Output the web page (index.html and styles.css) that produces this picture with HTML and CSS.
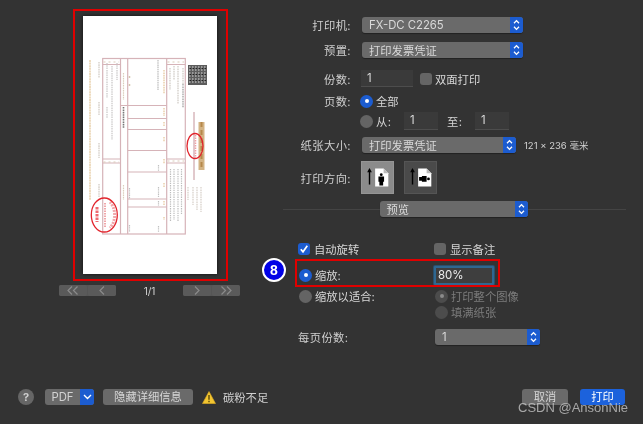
FILE: index.html
```html
<!DOCTYPE html>
<html lang="zh-CN">
<head>
<meta charset="utf-8">
<title>打印</title>
<link rel="stylesheet" href="styles.css">
</head>
<body>
<svg class="defs" width="0" height="0" aria-hidden="true">
  <symbol id="updown" viewBox="0 0 13 16">
    <path d="M4 6.300 6.500 3.600 9 6.300M4 9.700 6.500 12.400 9 9.700" fill="none" stroke="#fff" stroke-width="1.300"/>
  </symbol>
</svg>
<div class="dialog">
  <div class="main">
    <section class="preview">
      <div class="frame">
        <div class="sheet">
          <svg class="invoice" viewBox="83 16 134 258" width="134" height="258" aria-hidden="true">
            <g fill="none" stroke="#d6b3b8" stroke-width="1.200">
              <rect x="102.700" y="58.500" width="82.600" height="175.500"/>
              <path d="M120.500 58.500V234M127.700 58.500V234M166.700 58.500V234"/>
              <path d="M102.700 64.500H120.500M166.700 64.500H185.300M127.700 105.500H166.700M127.700 118.500H166.700M127.700 129.500H166.700M127.700 150.500H166.700M127.700 172H166.700M127.700 199H166.700M127.700 207H166.700M102.700 159H120.500M102.700 163H120.500M166.700 159H185.300M166.700 163H185.300M120.500 105.500H127.700"/>
            </g>
            <path d="M194 112V180" stroke="#c4939a" stroke-width="1"/>
            <g fill="none" stroke-width="1.200">
              <path d="M90 60V200" stroke="#eedcc0" stroke-width="2" stroke-dasharray="2 .6"/>
              <path d="M99 62V78M99 102V115M99 143V158M99 184V197" stroke="#cfc8c0" stroke-dasharray="1.600 .7"/>
              <path d="M107 63V98M112 66V140M117 63V80M107 107V118" stroke="#c8c5c5" stroke-dasharray="1.500 .8"/>
              <path d="M103.500 62H119M103.500 162H119M167.500 62H184M167.500 161H184" stroke="#d9cbb8" stroke-dasharray="2 3"/>
              <path d="M123.500 73V100M123.500 185V200" stroke="#dacdbb" stroke-dasharray="1.600 .8"/>
              <path d="M123.500 107V128" stroke="#777" stroke-width="1.600" stroke-dasharray="1.600 .8"/>
              <path d="M158 60V90" stroke="#bbb" stroke-dasharray="1.500 .7"/>
              <path d="M164 70V94M164 108V116M164 122V126M164 137V142M164 159V164M164 183V187M164 201V205M164 217V220" stroke="#ecd3b0" stroke-width="1.600" stroke-dasharray="1.600 .8"/>
              <path d="M170 68V90M174 66V80M178 66V104M183 68V84" stroke="#cdc8c2" stroke-dasharray="1.600 .8"/>
              <path d="M183 84V108" stroke="#999" stroke-dasharray="1.600 .8"/>
              <path d="M170.500 169V222M174 169V220M178 169V222M181.500 169V214" stroke="#bcbcbc" stroke-dasharray="1.300 1"/>
              <path d="M188 187V200M193 187V205M197 187V210M201 187V212" stroke="#d5cec6" stroke-dasharray="1.600 .8"/>
              <path d="M129.500 188V199M129.500 225V232M158.500 165V171M158.500 187V197M158.500 201V206M158.500 226V232" stroke="#c0c0c0" stroke-dasharray="1.400 .8"/>
              <path d="M129.500 76V78M129.500 84V86" stroke="#d4c5b0" stroke-width="1.500"/>
            </g>
            <path d="M201.500 122V170" stroke="#d3b384" stroke-width="6"/>
            <path d="M201.500 122V170" stroke="#b5884a" stroke-width="2" stroke-dasharray="5 3"/>
            <rect x="188" y="65" width="19" height="20" fill="#5c5c5c"/>
            <path d="M189 67H206M189 70H206M189 73H206M189 76H206M189 79H206M189 82H206" stroke="#ddd" stroke-width="1" stroke-dasharray="1.500 1.500"/>
            <path d="M190 68.500H206M190 74.500H206M190 80.500H206" stroke="#222" stroke-width="1" stroke-dasharray="1 2"/>
            <path d="M195.500 135V160" stroke="#f0a0a4" stroke-width="1.500" stroke-dasharray="1.500 1"/>
            <path d="M97 207V222" stroke="#ee6a70" stroke-width="3" stroke-dasharray="2.500 1"/>
            <path d="M105 203V228" stroke="#f0a8ab" stroke-width="2" stroke-dasharray="1.500 1"/>
            <path d="M110 202A13 17 0 0 1 110 228" fill="none" stroke="#f0a8ab" stroke-width="3" stroke-dasharray="2 1"/>
            <ellipse cx="195" cy="146" rx="8" ry="12.500" fill="none" stroke="#e2242c" stroke-width="1.300"/>
            <ellipse cx="104.300" cy="215" rx="13" ry="17" fill="none" stroke="#e2242c" stroke-width="1.300"/>
          </svg>
        </div>
      </div>
      <div class="pager">
        <div class="seg">
          <span class="seg-btn"><svg width="12" height="9" viewBox="0 0 12 9"><path d="M5 .5 1 4.500 5 8.500M10.500 .5 6.500 4.500 10.500 8.500" fill="none" stroke="#8b8b8b" stroke-width="1.200"/></svg></span>
          <span class="seg-btn"><svg width="6" height="9" viewBox="0 0 6 9"><path d="M5 .5 1 4.500 5 8.500" fill="none" stroke="#8b8b8b" stroke-width="1.200"/></svg></span>
        </div>
        <span class="page-no">1/1</span>
        <div class="seg">
          <span class="seg-btn"><svg width="6" height="9" viewBox="0 0 6 9"><path d="M1 .5 5 4.500 1 8.500" fill="none" stroke="#8b8b8b" stroke-width="1.200"/></svg></span>
          <span class="seg-btn"><svg width="12" height="9" viewBox="0 0 12 9"><path d="M1.500 .5 5.500 4.500 1.500 8.500M7 .5 11 4.500 7 8.500" fill="none" stroke="#8b8b8b" stroke-width="1.200"/></svg></span>
        </div>
      </div>
    </section>

    <section class="form">
      <div class="row row-printer">
        <label class="lbl">打印机:</label>
        <div class="select w-161"><span class="select-text">FX-DC C2265</span><svg class="stepper"><use href="#updown"/></svg></div>
      </div>
      <div class="row row-preset">
        <label class="lbl">预置:</label>
        <div class="select w-161"><span class="select-text">打印发票凭证</span><svg class="stepper"><use href="#updown"/></svg></div>
      </div>
      <div class="row row-copies">
        <label class="lbl">份数:</label>
        <div class="input w-52">1</div>
        <span class="check"></span>
        <span class="txt">双面打印</span>
      </div>
      <div class="row row-pages">
        <label class="lbl">页数:</label>
        <span class="radio on"></span>
        <span class="txt">全部</span>
      </div>
      <div class="row row-range">
        <span class="lbl"></span>
        <span class="radio"></span>
        <span class="txt from">从:</span>
        <div class="input w-34">1</div>
        <span class="txt to">至:</span>
        <div class="input w-34">1</div>
      </div>
      <div class="row row-paper">
        <label class="lbl">纸张大小:</label>
        <div class="select w-154"><span class="select-text">打印发票凭证</span><svg class="stepper"><use href="#updown"/></svg></div>
        <span class="size">121 x 236 毫米</span>
      </div>
      <div class="row row-orient">
        <label class="lbl">打印方向:</label>
        <div class="orient active">
          <svg width="33" height="33" viewBox="0 0 33 33">
            <path d="M8 24V10" stroke="#000" stroke-width="1.500"/><path d="M5.500 11 8 6.500 10.500 11Z"/>
            <path d="M14 7H23L28 12V26H14Z" fill="#fff"/><path d="M23 7V12H28Z" fill="#bbb"/>
            <circle cx="20.500" cy="13.500" r="1.500"/><path d="M17.500 15.500H23.500V21H22.500V25H18.500V21H17.500Z"/>
          </svg>
        </div>
        <div class="orient">
          <svg width="33" height="33" viewBox="0 0 33 33">
            <path d="M8 24V10" stroke="#000" stroke-width="1.500"/><path d="M5.500 11 8 6.500 10.500 11Z"/>
            <path d="M14 7H23L28 12V26H14Z" fill="#fff"/><path d="M23 7V12H28Z" fill="#bbb"/>
            <circle cx="25" cy="18" r="1.500"/><path d="M23 15V21H18V20H15V16H18V15Z"/>
          </svg>
        </div>
      </div>
      <div class="divider">
        <div class="select w-148"><span class="select-text">预览</span><svg class="stepper"><use href="#updown"/></svg></div>
      </div>

      <div class="opts">
        <div class="opt opt-rotate">
          <div class="cell"><span class="check on"><svg width="12" height="12" viewBox="0 0 12 12"><path d="M2.800 6.200 5 8.800 9.300 2.800" fill="none" stroke="#fff" stroke-width="1.700"/></svg></span><span class="txt">自动旋转</span></div>
          <div class="cell"><span class="check"></span><span class="txt">显示备注</span></div>
        </div>
        <div class="opt opt-scale">
          <div class="cell"><span class="radio on"></span><span class="txt">缩放:</span></div>
          <div class="input focus">80%</div>
        </div>
        <div class="opt opt-fit">
          <div class="cell"><span class="radio"></span><span class="txt">缩放以适合:</span></div>
          <div class="cell dim"><span class="radio dimmed on-dim"></span><span class="txt">打印整个图像</span></div>
        </div>
        <div class="opt opt-fill">
          <div class="cell"></div>
          <div class="cell dim"><span class="radio dimmed"></span><span class="txt">填满纸张</span></div>
        </div>
        <div class="opt opt-sheets">
          <div class="cell"><span class="lbl-plain">每页份数:</span></div>
          <div class="select w-105"><span class="select-text">1</span><svg class="stepper"><use href="#updown"/></svg></div>
        </div>
      </div>
    </section>
  </div>

  <footer class="footer">
    <span class="help">?</span>
    <div class="pdf"><span class="pdf-text">PDF</span><span class="pdf-arrow"><svg width="9" height="6" viewBox="0 0 9 6"><path d="M1 1 4.500 4.500 8 1" fill="none" stroke="#fff" stroke-width="1.400"/></svg></span></div>
    <button class="btn btn-hide">隐藏详细信息</button>
    <svg class="warn" width="14" height="13" viewBox="0 0 14 13"><path d="M7 .5 13.500 12.500H.5Z" fill="#f2c531" stroke="#e0ad20" stroke-width=".6"/><path d="M6.300 4H7.700V8.800H6.300ZM6.300 9.800H7.700V11.200H6.300Z" fill="#5a4708"/></svg>
    <span class="toner">碳粉不足</span>
    <span class="spacer"></span>
    <button class="btn btn-cancel">取消</button>
    <button class="btn btn-print">打印</button>
  </footer>

  <div class="mark-box"></div>
  <div class="badge">8</div>
  <div class="watermark">CSDN @AnsonNie</div>
</div>
</body>
</html>
```

FILE: styles.css
```css
* { box-sizing: border-box; }
html, body { margin: 0; padding: 0; height: 100%; background: #333333; overflow: hidden; }
body {
  font-family: Inter, "Liberation Sans", "Noto Sans CJK SC", sans-serif;
  font-size: 11.300px;
  color: #d6d6d6;
}
.defs { position: absolute; }
.dialog {
  position: relative;
  width: 643px;
  height: 424px;
  background: #333333;
  filter: blur(0.4px);
}
.main { display: flex; height: 389px; }

/* preview column */
.preview { width: 283px; padding: 9px 0 0 59px; flex: none; }
.frame {
  width: 155px;
  height: 272px;
  margin-left: 14px;
  border: 2px solid #e00000;
  padding: 5px 0 0 8px;
}
.sheet {
  width: 134px;
  height: 258px;
  background: #fff;
  box-shadow: 0 0 4px rgba(0, 0, 0, .7);
}
.invoice { display: block; filter: blur(0.3px); }
.pager { display: flex; align-items: center; width: 181px; margin-top: 4px; height: 11px; }
.seg { display: flex; width: 57px; height: 11px; background: #555; border-radius: 2px; gap: 1px; }
.seg-btn { flex: 1; display: flex; align-items: center; justify-content: center; background: #5a5a5a; border-radius: 2px; }
.page-no { flex: 1; text-align: center; font-size: 10px; color: #d2d2d2; }

/* form */
.form { flex: 1; display: flex; flex-direction: column; padding-top: 17px; }
.row { display: flex; align-items: center; height: 16px; }
.row-preset { margin-top: 9px; }
.row-copies { margin-top: 12px; height: 17px; }
.row-pages { margin-top: 6px; }
.row-range { margin-top: 3px; height: 18px; }
.row-paper { margin-top: 7px; }
.row-orient { margin-top: 8px; height: 33px; }
.lbl {
  width: 68px;
  margin-right: 11px;
  text-align: right;
  color: #cfcfcf;
  white-space: nowrap;
  letter-spacing: .4px;
  flex: none;
}
.txt { white-space: nowrap; color: #d6d6d6; }
.select {
  position: relative;
  height: 16px;
  display: flex;
  align-items: center;
  background: #6a6a6a;
  border-radius: 3px;
  padding-left: 7px;
  box-shadow: 0 1px 1px rgba(0, 0, 0, .35);
  flex: none;
}
.select-text { color: #d9d9d9; white-space: nowrap; }
.stepper {
  position: absolute;
  right: 0;
  top: 0;
  width: 13px;
  height: 16px;
  background: #1c5cd0;
  border-radius: 0 3px 3px 0;
}
.w-161 { width: 161px; }
.w-154 { width: 154px; }
.w-148 { width: 148px; }
.w-105 { width: 105px; }
.input {
  height: 17px;
  background: #3a3a3a;
  border-bottom: 1px solid #4d4d4d;
  padding: 1px 0 0 6px;
  line-height: 15px;
  color: #d9d9d9;
  flex: none;
}
.w-52 { width: 52px; margin-left: -1px; }
.w-34 { width: 34px; height: 18px; }
.check {
  width: 12px;
  height: 12px;
  border-radius: 3px;
  background: #656565;
  margin: 0 3px 0 7px;
  flex: none;
  display: block;
}
.check.on { background: #1c5cd0; }
.check svg { display: block; }
.radio {
  width: 13px;
  height: 13px;
  border-radius: 50%;
  background: #646464;
  flex: none;
  margin: 0 3px 0 -2px;
  position: relative;
}
.radio.on { background: #1c5cd0; }
.radio.on::after, .radio.on-dim::after {
  content: "";
  position: absolute;
  left: 4.500px;
  top: 4.500px;
  width: 4px;
  height: 4px;
  border-radius: 50%;
  background: #fff;
}
.radio.dimmed { background: #4c4c4c; }
.radio.on-dim::after { background: #8b8b8b; }
.from { width: 28px; letter-spacing: .4px; }
.to { width: 28px; margin-left: 9px; letter-spacing: .4px; }
.size { font-size: 9.500px; margin-left: 8px; color: #d2d2d2; white-space: nowrap; }
.orient {
  width: 33px;
  height: 33px;
  background: #4a4a4a;
  border: 1px solid #555;
  margin-right: 10px;
  margin-left: -1px;
  flex: none;
  display: flex;
  align-items: center;
  justify-content: center;
}
.orient + .orient { margin-left: 0; }
.orient.active { background: #8b8b8b; border-color: #959595; }
.divider {
  display: flex;
  justify-content: center;
  margin-top: 7px;
  height: 16px;
  width: 343px;
  background: linear-gradient(#444, #444) center / 100% 1px no-repeat;
}
.divider .select { margin-right: 2px; }

.opts { margin-left: 15px; margin-top: 24px; display: flex; flex-direction: column; }
.opt { display: flex; align-items: center; height: 16px; }
.opt > .cell:first-child { width: 135px; flex: none; }
.opt-rotate > .cell:first-child { width: 136px; }
.cell { display: flex; align-items: center; white-space: nowrap; }
.cell .check { margin: 0 4px 0 0; }
.cell .radio { margin: 0 3px 0 1px; }
.opt-scale { margin-top: 7px; height: 22px; }
.opt-fit { margin-top: 2px; }
.opt-sheets { margin-top: 9px; }
.opt-sheets .select { margin-left: 2px; }
.lbl-plain { color: #cfcfcf; letter-spacing: .4px; }
.dim { margin-left: 2px; }
.dim .txt { color: #7c7c7c; }
.dim .radio { margin: 0 3px 0 0; }
.input.focus {
  width: 60px;
  height: 19px;
  background: #3e3e3e;
  border: 2px solid #2f6790;
  box-shadow: 0 0 0 1px #2a4f6b;
  border-radius: 1px;
  padding: 0 0 0 2px;
  line-height: 15px;
  color: #ededed;
  font-size: 11.500px;
  margin-left: 1px;
}

/* footer */
.footer { display: flex; align-items: center; height: 16px; padding: 0 18px; }
.help {
  width: 16px;
  height: 16px;
  border-radius: 50%;
  background: #666;
  color: #cfcfcf;
  text-align: center;
  line-height: 16px;
  font-size: 11px;
  font-weight: 700;
  flex: none;
}
.pdf {
  display: flex;
  width: 49px;
  height: 16px;
  margin-left: 11px;
  border-radius: 3px;
  overflow: hidden;
  background: #6a6a6a;
  flex: none;
}
.pdf-text { width: 35px; text-align: center; line-height: 16px; color: #d2d2d2; }
.pdf-arrow { flex: 1; background: #1c5cd0; display: flex; align-items: center; justify-content: center; }
.btn {
  height: 16px;
  border: 0;
  padding: 0;
  border-radius: 3px;
  background: #6a6a6a;
  color: #d6d6d6;
  font: inherit;
  line-height: 16px;
  flex: none;
}
.btn-hide { width: 90px; margin-left: 9px; }
.warn { margin-left: 9px; flex: none; }
.toner { margin-left: 7px; color: #cfcfcf; white-space: nowrap; }
.spacer { flex: 1; }
.btn-cancel { width: 46px; }
.btn-print { width: 45px; margin-left: 12px; background: #1c62dc; color: #fff; }

/* annotations laid over the dialog */
.mark-box {
  position: absolute;
  left: 295px;
  top: 259px;
  width: 205px;
  height: 28px;
  border: 2px solid #e00000;
  pointer-events: none;
}
.badge {
  position: absolute;
  left: 262px;
  top: 258px;
  width: 24px;
  height: 24px;
  border-radius: 50%;
  background: #0000e6;
  border: 2px solid #fff;
  color: #fff;
  font-family: "Liberation Sans", sans-serif;
  font-weight: 700;
  font-size: 14px;
  line-height: 20px;
  text-align: center;
}
.watermark {
  position: absolute;
  left: 518px;
  top: 400px;
  font-family: "Liberation Sans", sans-serif;
  font-size: 13px;
  line-height: 16px;
  color: rgba(205, 205, 205, .75);
  white-space: nowrap;
}
```
